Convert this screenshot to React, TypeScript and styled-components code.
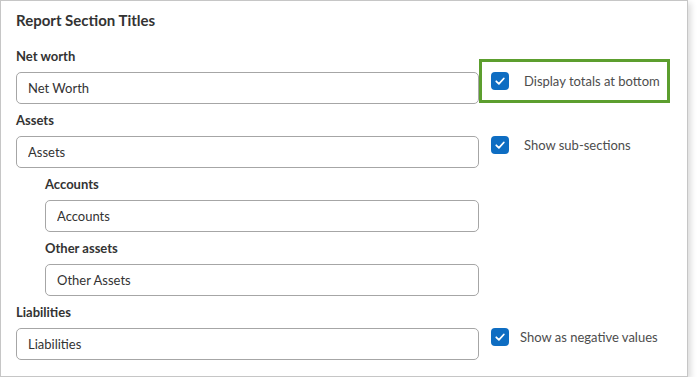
import styled, { createGlobalStyle } from "styled-components";

const GlobalStyle = createGlobalStyle`
  html, body {
    margin: 0;
    padding: 0;
    background: #ffffff;
  }
  body {
    font-family: Lato, "Open Sans", "Liberation Sans", sans-serif;
    color: #333333;
  }
`

const Card = styled.section`
  box-sizing: border-box;
  width: 688px;
  height: 377px;
  border: 1px solid #c6c6c6;
  background: #ffffff;
  box-shadow: 3px 3px 6px rgba(0, 0, 0, 0.14);
  padding: 9px 0 16px 15px;
`

const CardTitle = styled.h3`
  margin: 0 0 18px;
  font-size: 15px;
  line-height: 20px;
  font-weight: 700;
  color: #333333;
`

const Form = styled.div`
  display: flex;
  flex-direction: column;
  gap: 8px;
`

const Row = styled.div`
  display: grid;
  grid-template-columns: 463px 1fr;
`

interface FieldProps {
  indent?: boolean
}

const Field = styled.div<FieldProps>`
  display: flex;
  flex-direction: column;
  gap: 8px;
  padding-left: ${props => props.indent ? '29px' : '0'};
`

const Label = styled.label`
  font-size: 13px;
  line-height: 16px;
  font-weight: 700;
  color: #333333;
`

const Input = styled.input`
  box-sizing: border-box;
  width: 100%;
  height: 32px;
  border: 1px solid #a6a6a6;
  border-radius: 5px;
  padding: 0 11px;
  font-family: inherit;
  font-size: 13px;
  color: #333333;
  background: #ffffff;
  outline: none;
`

const OptionCell = styled.div`
  padding-top: 11px;
`

interface OptionProps {
  highlighted?: boolean
  gap?: number
}

const Option = styled.label<OptionProps>`
  box-sizing: border-box;
  display: inline-flex;
  align-items: center;
  gap: ${props => props.gap ?? 15}px;
  padding: 10px 7px 10px 9px;
  border: 3px solid ${props => props.highlighted ? '#5c9e2e' : 'transparent'};
  font-size: 13px;
  line-height: 18px;
  color: #4d4d4d;
  white-space: nowrap;
`

const Box = styled.span`
  display: inline-flex;
  align-items: center;
  justify-content: center;
  width: 18px;
  height: 18px;
  border-radius: 4px;
  background: #0e6dc2;
  flex-shrink: 0;
`

function Checkbox() {
  return (
    <Box>
      <svg width="12" height="12" viewBox="0 0 12 12">
        <path d="M2.3 6.3 L4.9 8.8 L9.8 3.5" fill="none" stroke="#ffffff" strokeWidth="1.8" strokeLinecap="round" strokeLinejoin="round" />
      </svg>
    </Box>
  )
}

interface SectionRow {
  label: string
  value: string
  indent?: boolean
  option?: string
  highlighted?: boolean
  gap?: number
}

const rows: SectionRow[] = [
  { label: 'Net worth', value: 'Net Worth', option: 'Display totals at bottom', highlighted: true },
  { label: 'Assets', value: 'Assets', option: 'Show sub-sections' },
  { label: 'Accounts', value: 'Accounts', indent: true },
  { label: 'Other assets', value: 'Other Assets', indent: true },
  { label: 'Liabilities', value: 'Liabilities', option: 'Show as negative values', gap: 11 },
]

export default function App() {
  return (
    <>
      <GlobalStyle />
      <Card>
        <CardTitle>Report Section Titles</CardTitle>
        <Form>
          {rows.map(row => (
            <Row key={row.label}>
              <Field indent={row.indent}>
                <Label>{row.label}</Label>
                <Input defaultValue={row.value} />
              </Field>
              <OptionCell>
                {row.option ? (
                  <Option highlighted={row.highlighted} gap={row.gap}>
                    <Checkbox />
                    {row.option}
                  </Option>
                ) : null}
              </OptionCell>
            </Row>
          ))}
        </Form>
      </Card>
    </>
  )
}
